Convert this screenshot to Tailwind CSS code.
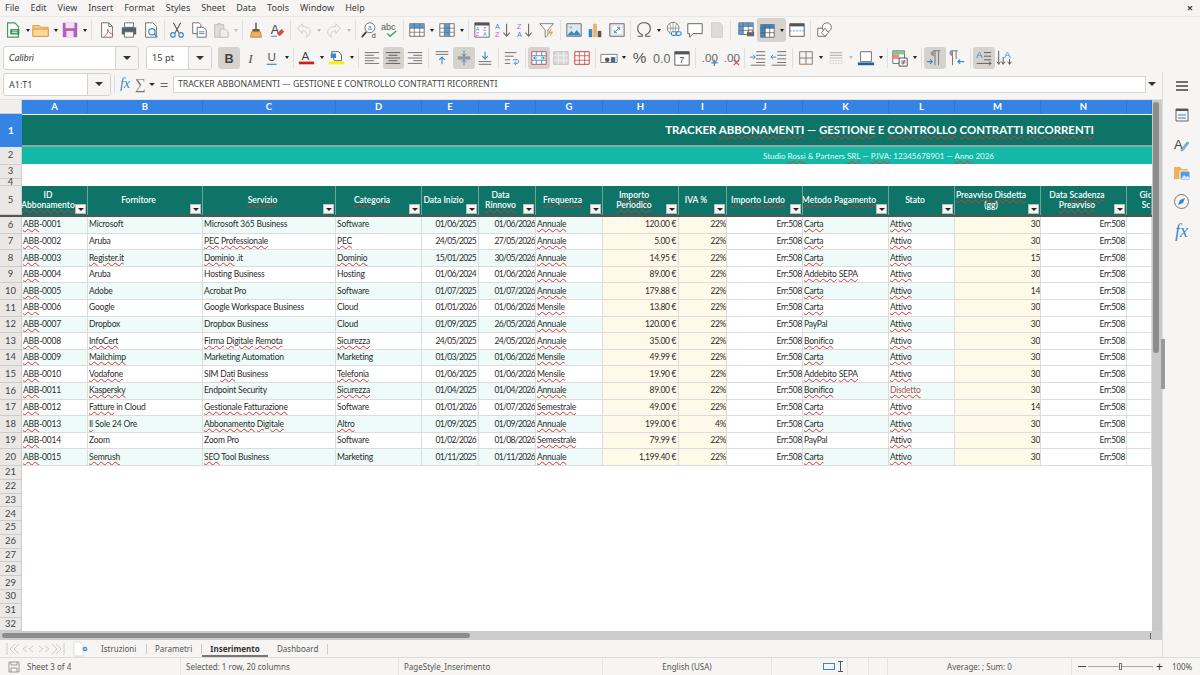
<!DOCTYPE html>
<html lang="en">
<head>
<meta charset="UTF-8">
<title>Tracker Abbonamenti - Calc</title>
<script src="https://cdn.jsdelivr.net/npm/@tailwindcss/browser@4"></script>
</head>
<body class="w-[1200px] h-[675px] overflow-hidden flex flex-col bg-[#f6f5f4] text-[#3d3d3d] font-['Noto_Sans',sans-serif]">

<!-- menu bar -->
<div class="h-[17px] shrink-0 flex items-center pl-[5px] gap-[11px] text-[9px] border-b border-[#e9e7e4] relative">
  <span>File</span><span>Edit</span><span>View</span><span>Insert</span><span>Format</span><span>Styles</span><span>Sheet</span><span>Data</span><span>Tools</span><span>Window</span><span>Help</span>
  <span class="absolute right-[7px] top-[1px] text-[11px] font-bold leading-[14px]">×</span>
</div>

<!-- toolbars -->
<div id="tb1" class="h-[26px] shrink-0 flex items-center pl-[2px]"></div>
<div id="tb2" class="h-[29px] shrink-0 flex items-center pl-[3px]"></div>

<div class="flex-1 min-h-0 flex">
  <div class="flex-1 min-w-0 flex flex-col">
    <!-- formula bar -->
    <div class="h-[27px] shrink-0 flex items-center pl-[3px] pb-[3px]">
      <div class="w-[108px] h-[23px] flex bg-white border border-[#d5d2ce] rounded-[3px] text-[9px]">
        <span class="w-[83px] pl-[5px] leading-[21px]">A1:T1</span>
        <span class="flex-1 bg-[#f6f5f4] border-l border-[#d5d2ce] rounded-r-[3px] flex items-center justify-center"><i class="block w-0 h-0 border-x-[4px] border-t-[4px] border-x-transparent border-t-[#333]"></i></span>
      </div>
      <span class="w-px h-[18px] bg-[#ddd] ml-[3px]"></span>
      <span class="ml-[2px] w-[16px] text-center text-[#3a87c8] text-[14px] italic font-['Liberation_Serif',serif] leading-none">fx</span>
      <span class="w-[14px] text-center text-[#777] text-[15px] leading-none font-['Liberation_Serif',serif]">∑</span>
      <i class="ml-[2px] block w-0 h-0 border-x-[3px] border-t-[3px] border-x-transparent border-t-[#333]"></i>
      <span class="ml-[3px] w-[12px] text-center text-[#666] text-[15px] leading-none">=</span>
      <div class="ml-[3px] w-[973px] h-[17px] bg-white border border-[#d8d6d2] text-[8.700px] leading-[15px] pl-[4px] text-[#444]">TRACKER ABBONAMENTI — GESTIONE E CONTROLLO CONTRATTI RICORRENTI</div>
      <i class="ml-[2px] block w-0 h-0 border-x-[4px] border-t-[4px] border-x-transparent border-t-[#333]"></i>
    </div>

    <!-- sheet -->
    <div class="flex-1 min-h-0 flex bg-white border-t border-[#e5e3e0]">
      <div id="sheet" class="w-[1152px] shrink-0 overflow-hidden flex flex-col font-['Lato',sans-serif]"></div>
      <div class="w-[10px] shrink-0 bg-[#c9c9c9] pl-[1px] pt-[2px]"><div class="w-[6px] h-[251px] bg-[#8c8c8c] rounded-[3px]"></div></div>
    </div>

    <!-- horizontal scrollbar -->
    <div class="h-[9px] shrink-0 bg-[#cdcdcd] pt-[2px] pl-[2px] relative">
      <div class="w-[468px] h-[5px] bg-[#8c8c8c] rounded-[3px]"></div>
      <span class="absolute right-[11px] top-[2px] w-px h-[6px] bg-[#666]"></span>
    </div>

    <!-- sheet tabs -->
    <div class="h-[17px] shrink-0 flex items-center text-[8px] text-[#555] pl-[6px]">
      <svg width="59" height="14" viewBox="0 0 59 14" fill="none" stroke="#ccc" stroke-width="1"><path d="M1 1v12M9 2L4 7l5 5M13 2L8 7l5 5M21 4l-4 3 4 3M27 4l-4 3 4 3M33 4l4 3-4 3M39 4l4 3-4 3M46 2l5 5-5 5M50 2l5 5-5 5M58 1v12"/></svg>
      <svg class="ml-[8px]" width="20" height="16" viewBox="0 0 20 16"><path d="M1 1h6l3 3v11H1z" fill="#fff" stroke="#ddd"/><circle cx="12" cy="8" r="2.300" fill="#3a87c8"/><path d="M10.800 8h2.400M12 6.800v2.400" stroke="#fff" stroke-width=".7"/></svg>
      <span class="ml-[8px] w-[45px]">Istruzioni</span><span class="w-px h-[10px] bg-[#ccc]"></span>
      <span class="ml-[8px] w-[46px]">Parametri</span><span class="w-px h-[10px] bg-[#ccc]"></span>
      <span class="h-[17px] w-[66px] text-center font-bold text-[#333] leading-[17px] border-b-[2px] border-[#777]">Inserimento</span>
      <span class="ml-[9px] w-[50px]">Dashboard</span><span class="w-px h-[10px] bg-[#ccc]"></span>
    </div>
  </div>

  <!-- sidebar -->
  <div class="w-[38px] shrink-0 border-l border-[#dedcd8] relative flex flex-col items-center pt-[8px] h-[586px]">
    <div class="absolute -left-[2px] top-[267px] w-[4px] h-[50px] bg-[#999]"></div>
    <svg class="ml-[1px]" width="14" height="12" viewBox="0 0 14 12" stroke="#444" stroke-width="1.300"><path d="M1 2h12M1 6h12M1 10h12"/></svg>
    <svg class="mt-[15px]" width="16" height="16" viewBox="0 0 16 16" fill="none"><path d="M2 2h12v12H2z" stroke="#666"/><path d="M2 2h12v2H2z" fill="#555"/><path d="M4 8h8M4 11h8" stroke="#3a87c8"/></svg>
    <svg class="mt-[13px]" width="18" height="18" viewBox="0 0 18 18" fill="none"><text x="1" y="13" font-family="Liberation Sans" font-size="13" fill="#444">A</text><path d="M8 15c2 0 3-1 4-3l4-5-2-1-4 5c-1 1-2 2-2 4z" fill="#7fb0dc" stroke="#3a87c8" stroke-width=".5"/></svg>
    <svg class="mt-[10px]" width="18" height="17" viewBox="0 0 18 17"><path d="M1 3h6l2 2h6v10H1z" fill="#f2b05e"/><path d="M7 7h10v9H7z" fill="#5b9bd5" stroke="#fff"/><path d="M8 15l3-4 2 2 2-1 2 3z" fill="#dceaf7"/></svg>
    <svg class="mt-[12px]" width="17" height="17" viewBox="0 0 17 17" fill="none"><circle cx="8.500" cy="8.500" r="7" stroke="#777"/><path d="M12 5l-2 5-5 2 2-5z" fill="#3a87c8"/></svg>
    <span class="mt-[12px] text-[#3a87c8] text-[18px] italic leading-none font-['Liberation_Serif',serif]">fx</span>
  </div>
</div>

<!-- status bar -->
<div class="h-[18px] shrink-0 border-t border-[#dedcd8] flex items-center text-[8px] text-[#555]">
  <span class="w-[27px] flex justify-center"><svg width="12" height="12" viewBox="0 0 12 12" fill="none" stroke="#999"><path d="M1 1h10v10H1zM3 1v3h6V1M3 11V7h6v4"/></svg></span>
  <span class="w-[153px]">Sheet 3 of 4</span><span class="w-px h-[17px] bg-[#e6e4e1]"></span>
  <span class="w-[217px] pl-[5px]">Selected: 1 row, 20 columns</span><span class="w-px h-[17px] bg-[#e6e4e1]"></span>
  <span class="w-[203px] pl-[5px]">PageStyle_Inserimento</span><span class="w-px h-[17px] bg-[#e6e4e1]"></span>
  <span class="w-[168px] text-center">English (USA)</span><span class="w-px h-[17px] bg-[#e6e4e1]"></span>
  <span class="w-[75px] flex justify-end items-center gap-[3px] pr-[4px]"><i class="block w-[12px] h-[7px] border border-[#3a87c8]"></i><svg width="5" height="11" viewBox="0 0 5 11" fill="none" stroke="#555"><path d="M0 .5h5M0 10.500h5M2.500.5v10"/></svg></span><span class="w-px h-[17px] bg-[#e6e4e1]"></span>
  <span class="w-[20px]"></span><span class="w-px h-[17px] bg-[#e6e4e1]"></span>
  <span class="w-[18px]"></span><span class="w-px h-[17px] bg-[#e6e4e1]"></span>
  <span class="w-[183px] text-center">Average: ; Sum: 0</span><span class="w-px h-[17px] bg-[#e6e4e1]"></span>
  <span class="ml-[6px] w-[8px] h-[1.500px] bg-[#444]"></span>
  <span class="ml-[2px] w-[65px] h-px bg-[#aaa] relative"><i class="absolute left-[31px] -top-[3px] w-[3px] h-[7px] border border-[#777] bg-white"></i></span>
  <span class="ml-[3px] text-[12px] leading-none text-[#333]">+</span>
  <span class="ml-[9px]">100%</span>
</div>

<script>
  // toolbar icons, all on a 20x20 box
  const I = {
    newdoc: '<path d="M4 2h8l4 4v12H4z" fill="#fff" stroke="#3f9a5b" stroke-width="1.300"/><path d="M7 9h10v6H7z" fill="#2e8b57"/><path d="M9 11h6M9 13h6" stroke="#fff"/>',
    open: '<path d="M1 5h7l2 2h8v10H1z" fill="#f7c77e" stroke="#dd9a3c"/><path d="M1 9h17v8H1z" fill="#fbd79c" stroke="#dd9a3c"/>',
    save: '<path d="M2 2h16v16H2z" fill="#b25fb5"/><path d="M5 2h10v6H5z" fill="#f1dff2"/><path d="M6 11h8v7H6z" fill="#f1dff2"/>',
    pdf: '<path d="M4 2h8l4 4v12H4z" fill="#fff" stroke="#666"/><path d="M12 2v4h4" fill="none" stroke="#666"/><path d="M7 17c3-2 5-6 4-8-1 1 0 4 6 6" fill="none" stroke="#d8453e"/>',
    print: '<path d="M5 2h10v5H5z" fill="#fff" stroke="#666"/><path d="M2 7h16v8H2z" fill="#54626f"/><path d="M5 12h10v6H5z" fill="#fff" stroke="#666"/>',
    preview: '<path d="M4 2h8l4 4v12H4z" fill="#fff" stroke="#666"/><circle cx="11" cy="12" r="3.500" fill="none" stroke="#3a87c8" stroke-width="1.300"/><path d="M13.500 14.500L17 18" stroke="#3a87c8" stroke-width="1.500"/>',
    cut: '<path d="M6 2l6 11M14 2L8 13" stroke="#555" stroke-width="1.200"/><circle cx="5.500" cy="15.500" r="2.500" fill="none" stroke="#3a87c8" stroke-width="1.300"/><circle cx="14.500" cy="15.500" r="2.500" fill="none" stroke="#3a87c8" stroke-width="1.300"/>',
    copy: '<path d="M3 2h7l2 2v10H3z" fill="#fff" stroke="#666"/><path d="M8 7h7l3 3v8H8z" fill="#fff" stroke="#666"/><path d="M10 12h6M10 14h6" stroke="#3a87c8"/>',
    paste: '<path d="M3 4h10v14H3z" fill="#ddd" stroke="#bbb"/><path d="M6 2h4v3H6z" fill="#ccc"/><path d="M9 9h6l3 3v6H9z" fill="#eee" stroke="#bbb"/>',
    clone: '<path d="M9 2h2v7H9z" fill="#777"/><path d="M6 9h8v3H6z" fill="#555"/><path d="M5 12h10l1 6H4z" fill="#f2b05e" stroke="#c9862f"/>',
    clear: '<text x="3" y="14" font-family="Liberation Sans" font-size="14" fill="#444">A</text><path d="M10 14l5-5 3 3-5 5z" fill="#e2453c"/><path d="M3 17h7" stroke="#3a87c8"/>',
    undo: '<path d="M3 8l5-5v3c6 0 9 3 9 6s-2 5-5 6c2-2 2-7-4-7v3z" fill="none" stroke="#c9c9c9"/>',
    redo: '<path d="M17 8l-5-5v3c-6 0-9 3-9 6s2 5 5 6c-2-2-2-7 4-7v3z" fill="none" stroke="#c9c9c9"/>',
    find: '<circle cx="11" cy="7.500" r="5.500" fill="#fff" stroke="#666"/><path d="M7 12l-5 6" stroke="#444" stroke-width="2"/><text x="8.500" y="10" font-family="Liberation Sans" font-size="8" fill="#3a87c8">a</text><text x="13" y="19" font-family="Liberation Sans" font-size="8" fill="#444">d</text>',
    spell: '<text x="0" y="10" font-family="Liberation Sans" font-size="10" fill="#555">abc</text><path d="M7 14l3 3 7-6" fill="none" stroke="#3fa35f" stroke-width="1.500"/>',
    rows: '<path d="M2 3h16v14H2z" fill="#fff" stroke="#666"/><path d="M2 3h16v5H2z" fill="#5b9bd5"/><path d="M2 8h16M2 12.500h16M7 3v14M13 3v14" stroke="#666" stroke-width=".8"/>',
    cols: '<path d="M2 3h16v14H2z" fill="#fff" stroke="#666"/><path d="M7 3h6v14H7z" fill="#5b9bd5"/><path d="M7 3v14M13 3v14M2 8h16M2 12.500h16" stroke="#666" stroke-width=".8"/>',
    sort: '<path d="M2 2h16v16H2z" fill="#fff" stroke="#666"/><path d="M2 2h16v3H2z" fill="#555"/><text x="3" y="11" font-family="Liberation Sans" font-size="6" fill="#3a87c8">A</text><text x="3" y="17" font-family="Liberation Sans" font-size="6" fill="#c564c8">Z</text><text x="11" y="11" font-family="Liberation Sans" font-size="6" fill="#c564c8">Z</text><text x="11" y="17" font-family="Liberation Sans" font-size="6" fill="#3a87c8">A</text>',
    az: '<text x="1" y="9" font-family="Liberation Sans" font-size="8" fill="#3a87c8">A</text><text x="1" y="18" font-family="Liberation Sans" font-size="8" fill="#c564c8">Z</text><path d="M14 3v14M10.500 13l3.500 4 3.500-4" fill="none" stroke="#666" stroke-width="1.200"/>',
    za: '<text x="1" y="9" font-family="Liberation Sans" font-size="8" fill="#c564c8">Z</text><text x="1" y="18" font-family="Liberation Sans" font-size="8" fill="#3a87c8">A</text><path d="M14 3v14M10.500 13l3.500 4 3.500-4" fill="none" stroke="#666" stroke-width="1.200"/>',
    filter: '<path d="M2 3h15l-6 7v6l-3 2v-8z" fill="#fff" stroke="#777"/><path d="M14 9l-3 5h3l-1 4 4-6h-3l1-3z" fill="#f2a33c"/>',
    image: '<path d="M2 3h16v14H2z" fill="#dbeaf7" stroke="#666"/><circle cx="6.500" cy="7" r="1.500" fill="#f2b05e"/><path d="M2 16l5-5 3 3 3-4 5 6z" fill="#3a87c8"/>',
    chart: '<path d="M3 9h4v9H3z" fill="#3a87c8"/><path d="M8 3h4v15H8z" fill="#f2b05e"/><path d="M13 11h4v7h-4z" fill="#555"/>',
    pivot: '<path d="M2 3h16v14H2z" fill="#e6e6e6" stroke="#666"/><path d="M5 6h10v8H5z" fill="#fff"/><path d="M7 13l6-6M13 10V7h-3M7 10v3h3" fill="none" stroke="#3a87c8"/>',
    omega: '<path d="M3 17h5v-2c-3-1-5-3-5-7 0-4 3-6 7-6s7 2 7 6c0 4-2 6-5 7v2h5" fill="none" stroke="#555" stroke-width="1.200"/>',
    link: '<circle cx="9" cy="8" r="6.500" fill="#fff" stroke="#777"/><path d="M2.500 8h13M9 1.500v13M5 3c2 3 2 7 0 10M13 3c-2 3-2 7 0 10" fill="none" stroke="#777" stroke-width=".7"/><rect x="7" y="12" width="6" height="4" rx="2" fill="#fff" stroke="#3a87c8" stroke-width="1.200"/><rect x="12" y="12" width="6" height="4" rx="2" fill="none" stroke="#3a87c8" stroke-width="1.200"/>',
    comment: '<path d="M2 3h16v11H8l-4 4v-4H2z" fill="#fff" stroke="#666" stroke-width="1.100"/>',
    note: '<path d="M4 2h9l3 3v13H4z" fill="#dcdcdc" stroke="#ccc"/>',
    headers: '<path d="M2 2h16v13H2z" fill="#fff" stroke="#666"/><path d="M2 2h16v4H2zM2 2h5v13H2z" fill="#5b9bd5"/><path d="M2 6h16M2 10.500h16M7 2v13M12.500 2v13" stroke="#666" stroke-width=".8"/><path d="M11 12h8v5h-8z" fill="#666"/><path d="M13 10h4v3h-4z" fill="#fff" stroke="#666"/>',
    freeze: '<path d="M3 4h15v14H3z" fill="#fff" stroke="#666"/><path d="M3 4h15v4H3zM3 4h5v14H3z" fill="#3a87c8"/><path d="M3 8h15M3 13h15M8 4v14M13 4v14" stroke="#555" stroke-width=".8"/>',
    split: '<path d="M2 3h16v14H2z" fill="#fff" stroke="#555"/><path d="M2 3h16v3H2z" fill="#555"/><path d="M2 11h16" stroke="#3a87c8" stroke-dasharray="2 1.500"/>',
    shapes: '<path d="M2 8h9v9H2z" fill="#fff" stroke="#666"/><circle cx="12" cy="7" r="5" fill="#fff" stroke="#666"/><path d="M10 8l4 5-4 4-4-4z" fill="#fff" stroke="#666"/>',
    bold: '<text x="5" y="15" font-family="Liberation Sans" font-weight="700" font-size="14" fill="#444">B</text>',
    italic: '<text x="7" y="15" font-family="Liberation Serif" font-style="italic" font-size="15" fill="#555">I</text>',
    under: '<text x="5" y="13" font-family="Liberation Sans" font-size="13" fill="#555">U</text><path d="M4 17h11" stroke="#3a87c8" stroke-width="1.300"/>',
    fcolor: '<text x="4" y="12" font-family="Liberation Sans" font-size="13" fill="#444">A</text><path d="M1 14h17v3H1z" fill="#c9211e"/>',
    bcolor: '<path d="M4 3h8l3 4v6H7z" fill="#fff" stroke="#555"/><path d="M3 5h6v5H3z" fill="#3a87c8"/><path d="M1 14h17v3H1z" fill="#ffee00"/>',
    left: '<path d="M2 4h16M2 7h10M2 10h16M2 13h10M2 16h16" stroke="#666"/>',
    center: '<path d="M2 4h16M5 7h10M2 10h16M5 13h10M2 16h16" stroke="#555"/>',
    right: '<path d="M2 4h16M8 7h10M2 10h16M8 13h10M2 16h16" stroke="#666"/>',
    top: '<path d="M3 3h14M3 6h14" stroke="#666"/><path d="M10 17V9M7 12l3-3 3 3" fill="none" stroke="#3a87c8" stroke-width="1.200"/>',
    middle: '<path d="M3 9h14M3 11h14" stroke="#666"/><path d="M10 2v6M7.500 5.500L10 8l2.500-2.500M10 18v-6M7.500 14.500L10 12l2.500 2.500" fill="none" stroke="#3a87c8"/>',
    bottom: '<path d="M3 14h14M3 17h14" stroke="#666"/><path d="M10 3v8M7 8l3 3 3-3" fill="none" stroke="#3a87c8" stroke-width="1.200"/>',
    wrap: '<path d="M2 4h13M2 8h10M2 12h6M2 16h6" stroke="#666"/><path d="M11 12h5c2 0 2 4 0 4h-3M14.500 14l-2 2 2 2" fill="none" stroke="#3a87c8"/>',
    merge: '<path d="M2 3h16v14H2z" fill="#fff" stroke="#d8453e"/><path d="M2 7.500h16M2 12.500h16M7 3v4.500M13 3v4.500M7 12.500V17M13 12.500V17" stroke="#3a87c8"/><path d="M4 10h4M12 10h4M6 8.500L4 10l2 1.500M14 8.500l2 1.500-2 1.500" fill="none" stroke="#3a87c8"/>',
    mergec: '<path d="M2 3h16v14H2z" fill="#dadada" stroke="#bbb"/><path d="M2 7.500h16M2 12.500h16M7 3v14M13 3v14" stroke="#f0f0f0"/>',
    unmerge: '<path d="M2 3h16v14H2z" fill="#fff" stroke="#c8322c"/><path d="M2 7.500h16M2 12.500h16M7 3v14M13 3v14" stroke="#c8322c" stroke-width=".8"/>',
    numfmt: '<path d="M1 6h18v9H1z" fill="#fff" stroke="#777"/><circle cx="8" cy="12" r="2.500" fill="#555"/><path d="M12 9h5v6h-5z" fill="#3d6f96"/>',
    percent: '<text x="3" y="16" font-family="Liberation Sans" font-size="17" fill="#555">%</text>',
    number: '<text x="1" y="15" font-family="Liberation Sans" font-size="14" fill="#666">0.0</text>',
    date: '<path d="M2 3h16v15H2z" fill="#fff" stroke="#555"/><path d="M2 3h16v3H2z" fill="#555"/><text x="7" y="16" font-family="Liberation Sans" font-size="10" fill="#444">7</text>',
    adddec: '<text x="2" y="14" font-family="Liberation Sans" font-size="13" fill="#666">.00</text><path d="M16 12v7M12.500 15.500h7" stroke="#3a87c8" stroke-width="1.300"/>',
    deldec: '<text x="2" y="14" font-family="Liberation Sans" font-size="13" fill="#666">.00</text><path d="M13 12l6 6M19 12l-6 6" stroke="#d8453e" stroke-width="1.300"/>',
    indent: '<path d="M8 3h10M8 7h10M8 11h10M8 15h10M2 18h16" stroke="#666"/><path d="M1 9h6M4.500 6.500L7 9l-2.500 2.500" fill="none" stroke="#3a87c8"/>',
    outdent: '<path d="M8 3h10M8 7h10M8 11h10M8 15h10M2 18h16" stroke="#666"/><path d="M7 9H1M3.500 6.500L1 9l2.500 2.500" fill="none" stroke="#3a87c8"/>',
    borders: '<path d="M3 3h14v14H3zM10 3v14M3 10h14" fill="none" stroke="#777"/><path d="M3 17h14" stroke="#e8a04a"/>',
    bstyle: '<path d="M3 4h14M3 7h14M3 10h14" stroke="#bbb" stroke-width="1.300"/><path d="M3 13h14M3 16h14" stroke="#ccc" stroke-dasharray="2 1"/>',
    bcol: '<path d="M4 3h12v11H4z" fill="#fff" stroke="#666"/><path d="M1 15h18v3H1z" fill="#1e5f9e"/>',
    cond: '<path d="M2 2h13v14H2z" fill="#fff" stroke="#666"/><path d="M2 2h13v4H2z" fill="#7fc98f"/><path d="M2 6h7v5H2z" fill="#e88"/><path d="M9 10h9v9H9z" fill="#fff" stroke="#444"/><path d="M11 13.500h5M11 15.500h5M15 12.500l-2 5" stroke="#444" stroke-width=".8"/>',
    ltr: '<path d="M8 2h8M10 2v16M14 2v16" fill="none" stroke="#777" stroke-width="1.100"/><path d="M9 2C6 2 5 4 5 5c0 2 2 3 4 3V2" fill="#999"/><path d="M1 14h6M4.500 11.500L7 14l-2.500 2.500" fill="none" stroke="#3a87c8" stroke-width="1.200"/>',
    rtl: '<path d="M3 2h8M5 2v16M9 2v9" fill="none" stroke="#777" stroke-width="1.100"/><path d="M3 2C1 2 1 8 5 8V2" fill="#999"/><path d="M18 14h-7M13.500 11.500L11 14l2.500 2.500" fill="none" stroke="#3a87c8" stroke-width="1.200"/>',
    horiz: '<text x="1" y="10" font-family="Liberation Sans" font-size="11" fill="#3a87c8">A</text><path d="M10 4h8M10 8h8M10 12h8M2 16h16M15.500 14l2.500 2-2.500 2" fill="none" stroke="#555"/>',
    vert: '<text x="9" y="10" font-family="Liberation Sans" font-size="11" fill="#3a87c8">A</text><path d="M3 2v15M8 9v8M15 11v6M1 14l2 3 2-3M6 14l2 3 2-3M13 14l2 3 2-3" fill="none" stroke="#555"/>'
  };
  const svg = (n, s) => `<svg width="${s || 18}" height="${s || 18}" viewBox="0 0 20 20">${I[n]}</svg>`;
  const btn = (n, on) => `<span class="w-[21.750px] h-[22px] shrink-0 flex items-center justify-center rounded-[3px] ${on ? 'bg-[#d6d3cf]' : ''}">${svg(n)}</span>`;
  const arr = (off) => `<span class="w-[8px] shrink-0 flex justify-center"><i class="block w-0 h-0 border-x-[2.500px] border-t-[3px] border-x-transparent ${off ? 'border-t-[#bbb]' : 'border-t-[#222]'}"></i></span>`;
  const sep = `<span class="w-[3px] h-[20px] shrink-0 flex justify-center mx-[1px]"><i class="block w-px h-full bg-[#e1dfdb]"></i></span>`;
  const combo = (w, txt) => `<span class="${w} h-[24px] shrink-0 flex bg-white border border-[#d5d2ce] rounded-[3px] text-[9.300px]"><span class="flex-1 pl-[5px] leading-[22px]">${txt}</span><span class="w-[23px] bg-[#f6f5f4] border-l border-[#d5d2ce] rounded-r-[3px] flex items-center justify-center"><i class="block w-0 h-0 border-x-[4px] border-t-[4px] border-x-transparent border-t-[#333]"></i></span></span>`;
  const back = '<span class="-ml-[2px]"></span>';
  const gap2 = '<span class="w-[2px] shrink-0"></span>';

  document.getElementById('tb1').innerHTML = [
    btn('newdoc'), arr(), back, btn('open'), arr(), btn('save'), arr(), sep, gap2,
    btn('pdf'), btn('print'), btn('preview'), sep,
    btn('cut'), btn('copy'), btn('paste'), arr(1), sep,
    btn('clone'), btn('clear'), sep,
    btn('undo'), arr(1), btn('redo'), arr(1), sep,
    btn('find'), btn('spell'), sep,
    btn('rows'), arr(), btn('cols'), arr(), sep,
    btn('sort'), btn('az'), btn('za'), btn('filter'), sep,
    btn('image'), btn('chart'), btn('pivot'), sep,
    btn('omega'), arr(), btn('link'), btn('comment'), btn('note'), sep, gap2,
    btn('headers'),
    `<span class="w-[29px] h-[24px] shrink-0 flex items-center bg-[#d6d3cf] rounded-[3px]"><span class="w-[21px] flex justify-center">${svg('freeze')}</span>${arr()}</span>`,
    btn('split'), sep, gap2, btn('shapes')
  ].join('');

  document.getElementById('tb2').innerHTML = [
    combo('w-[136px]', '<span class="italic font-[\'Lato\',sans-serif]">Calibri</span>'),
    '<span class="w-[7px] shrink-0"></span>',
    combo('w-[66px]', '15 pt'),
    '<span class="w-[6px] shrink-0"></span>',
    btn('bold', 1), btn('italic'), btn('under'), arr(), sep,
    btn('fcolor'), arr(), btn('bcolor'), arr(), sep,
    btn('left'), btn('center', 1), btn('right'), sep,
    btn('top'), btn('middle', 1), btn('bottom'), sep,
    btn('wrap'), sep,
    btn('merge', 1), btn('mergec'), btn('unmerge'), sep,
    btn('numfmt'), arr(), btn('percent'), btn('number'), btn('date'), sep,
    btn('adddec'), btn('deldec'), sep,
    btn('indent'), btn('outdent'), sep,
    btn('borders'), arr(), btn('bstyle'), arr(1), btn('bcol'), arr(), sep,
    btn('cond'), arr(), sep,
    btn('ltr', 1), btn('rtl'), sep,
    btn('horiz', 1), btn('vert')
  ].join('');

  // ~word~ gets the spell checker's red squiggle
  const sq = s => String(s).replace(/~([^~]+)~/g, '<span class="underline decoration-wavy decoration-[#d33] decoration-1 underline-offset-[1px]">$1</span>');
  const gridCols = 'grid grid-cols-[22px_66px_115px_133px_86px_57px_57px_67px_76px_48px_76px_86px_66px_86px_86px_25px]';
  const letters = ['A','B','C','D','E','F','G','H','I','J','K','L','M','N',''];
  const filterBtn = '<i class="absolute right-[1px] bottom-[1px] w-[11px] h-[10px] bg-[#f4f4f4] border border-[#bbb] flex items-center justify-center"><b class="block w-0 h-0 border-x-[3px] border-t-[3px] border-x-transparent border-t-[#222]"></b></i>';
  const heads = ['ID<br>~Abbonamento~','Fornitore','~Servizio~','~Categoria~','Data Inizio','Data<br>~Rinnovo~','~Frequenza~','~Importo~<br>~Periodico~','IVA %','~Importo~ ~Lordo~','~Metodo~ ~Pagamento~','Stato','~Preavviso~ ~Disdetta~<br>(~gg~)','Data ~Scadenza~<br>~Preavviso~','Gio<br>Sc'];
  const rows = [
    ['~ABB~-0001','Microsoft','Microsoft 365 Business','Software','01/06/2025','01/06/2026','~Annuale~','120.00 €','22%','~Carta~','~Attivo~',30],
    ['~ABB~-0002','Aruba','~PEC~ ~Professionale~','~PEC~','24/05/2025','27/05/2026','~Annuale~','5.00 €','22%','~Carta~','~Attivo~',30],
    ['~ABB~-0003','~Register.it~','~Dominio~ .it','~Dominio~','15/01/2025','30/05/2026','~Annuale~','14.95 €','22%','~Carta~','~Attivo~',15],
    ['~ABB~-0004','Aruba','Hosting Business','Hosting','01/06/2024','01/06/2026','~Annuale~','89.00 €','22%','~Addebito~ ~SEPA~','~Attivo~',30],
    ['~ABB~-0005','Adobe','Acrobat Pro','Software','01/07/2025','01/07/2026','~Annuale~','179.88 €','22%','~Carta~','~Attivo~',14],
    ['~ABB~-0006','Google','Google Workspace Business','Cloud','01/01/2026','01/06/2026','~Mensile~','13.80 €','22%','~Carta~','~Attivo~',30],
    ['~ABB~-0007','Dropbox','Dropbox Business','Cloud','01/09/2025','26/05/2026','~Annuale~','120.00 €','22%','PayPal','~Attivo~',30],
    ['~ABB~-0008','~InfoCert~','~Firma~ ~Digitale~ ~Remota~','~Sicurezza~','24/05/2025','24/05/2026','~Annuale~','35.00 €','22%','~Bonifico~','~Attivo~',30],
    ['~ABB~-0009','~Mailchimp~','Marketing Automation','Marketing','01/03/2025','01/06/2026','~Mensile~','49.99 €','22%','~Carta~','~Attivo~',30],
    ['~ABB~-0010','~Vodafone~','SIM ~Dati~ Business','~Telefonia~','01/06/2025','01/06/2026','~Mensile~','19.90 €','22%','~Addebito~ ~SEPA~','~Attivo~',30],
    ['~ABB~-0011','~Kaspersky~','Endpoint Security','~Sicurezza~','01/04/2025','01/04/2026','~Annuale~','89.00 €','22%','~Bonifico~','~Disdetto~',30],
    ['~ABB~-0012','~Fatture~ in Cloud','~Gestionale~ ~Fatturazione~','Software','01/01/2026','01/07/2026','~Semestrale~','49.00 €','22%','~Carta~','~Attivo~',14],
    ['~ABB~-0013','~Il~ Sole 24 Ore','~Abbonamento~ ~Digitale~','~Altro~','01/09/2025','01/09/2026','~Annuale~','199.00 €','4%','~Carta~','~Attivo~',30],
    ['~ABB~-0014','Zoom','Zoom Pro','Software','01/02/2026','01/08/2026','~Semestrale~','79.99 €','22%','PayPal','~Attivo~',30],
    ['~ABB~-0015','~Semrush~','~SEO~ Tool Business','Marketing','01/11/2025','01/11/2026','~Annuale~','1,199.40 €','22%','~Carta~','~Attivo~',30]
  ];
  const rowHead = (n, cl) => `<span class="flex items-center justify-center bg-[#e9e8e6] border-r border-b border-[#cfcdc9] text-[#444] text-[9.500px] ${cl || ''}">${n}</span>`;
  const cell = (txt, cl) => `<span class="flex items-center overflow-hidden whitespace-nowrap border-r border-b border-[#dcdcdc] text-[8.500px] text-[#2b2b2b] ${cl}"><span>${sq(txt)}</span></span>`;
  const tx = 'tracking-[-0.2px] pl-[1px] ';
  const dt = 'tracking-[-0.65px] justify-end ';
  const nm = 'tracking-[-0.35px] justify-end ';

  let html = `<div class="${gridCols} h-[14px] shrink-0 bg-[#3584e4] text-white text-[9.500px] font-bold"><span class="bg-[#f0efed] border-r border-b border-[#cfcdc9]"></span>` +
    letters.map(l => `<span class="flex items-center justify-center border-r border-[#2f78d0]">${l}</span>`).join('') + '</div>';

  html += `<div class="flex h-[33px] shrink-0"><span class="w-[22px] flex items-center justify-center bg-[#3584e4] text-white text-[10px] font-bold">1</span><div class="flex-1 flex items-center justify-end pr-[58px] bg-[#0f7468] border-t border-white border-b-[2px] border-b-[#8fa8a3] text-white text-[11.450px] font-bold"><span>${sq('TRACKER ~ABBONAMENTI~ — ~GESTIONE~ E ~CONTROLLO~ ~CONTRATTI~ ~RICORRENTI~')}</span></div></div>`;
  html += `<div class="flex h-[18px] shrink-0">${rowHead(2, 'w-[22px]')}<div class="flex-1 flex items-center justify-end pr-[158px] bg-[#14b8a6] border-b border-white text-[#e6fbf7] text-[8px]"><span>${sq('Studio ~Rossi~ &amp; Partners ~SRL~ — ~P.IVA~: 12345678901 — ~Anno~ 2026')}</span></div></div>`;
  html += `<div class="flex h-[14px] shrink-0">${rowHead(3, 'w-[22px]')}</div>`;
  html += `<div class="flex h-[7px] shrink-0 leading-none">${rowHead(4, 'w-[22px] text-[7px]')}</div>`;

  // the autofilter button takes room on the right, so header text sits left of centre
  html += `<div class="${gridCols} h-[31px] shrink-0 border-b-[2px] border-[#555]">${rowHead(5)}` +
    heads.map((h, i) => `<span class="relative flex items-center justify-center text-center leading-[9.500px] ${i === 14 ? 'pl-[14px]' : 'pr-[13px]'} bg-[#0f7468] border-r border-[#6fa39b] text-white text-[8.500px] font-semibold overflow-hidden whitespace-nowrap"><span>${i === 14 ? h : sq(h)}</span>${i < 14 ? filterBtn : ''}</span>`).join('') + '</div>';

  rows.forEach((r, i) => {
    const tint = i % 2 === 0 ? 'bg-[#eefbf8]' : 'bg-white';
    const stato = r[10].includes('Disdetto') ? 'text-[#a55]' : 'text-[#1f7a3d]';
    html += `<div class="${gridCols} h-[16.600px] shrink-0">` + rowHead(i + 6) +
      cell(r[0], tx + tint) + cell(r[1], tx + tint) + cell(r[2], tx + tint) + cell(r[3], tx + tint) +
      cell(r[4], dt + 'pr-[2px] ' + tint) + cell(r[5], dt + tint) + cell(r[6], tx + tint) +
      cell(r[7], nm + 'pr-[2px] bg-[#fef9e8]') + cell(r[8], nm + 'bg-[#fef9e8]') + cell('Err:508', nm + 'bg-white') +
      cell(r[9], tx + tint) + cell(r[10], tx + tint + ' ' + stato) + cell(r[11], nm + 'bg-[#fef9e8]') +
      cell('Err:508', nm + 'pr-[1px] bg-white') + cell('', 'bg-white') + '</div>';
  });
  for (let n = 21; n <= 32; n++) {
    html += `<div class="flex h-[13.800px] shrink-0">${rowHead(n, 'w-[22px]')}</div>`;
  }
  document.getElementById('sheet').innerHTML = html;
</script>
</body>
</html>
